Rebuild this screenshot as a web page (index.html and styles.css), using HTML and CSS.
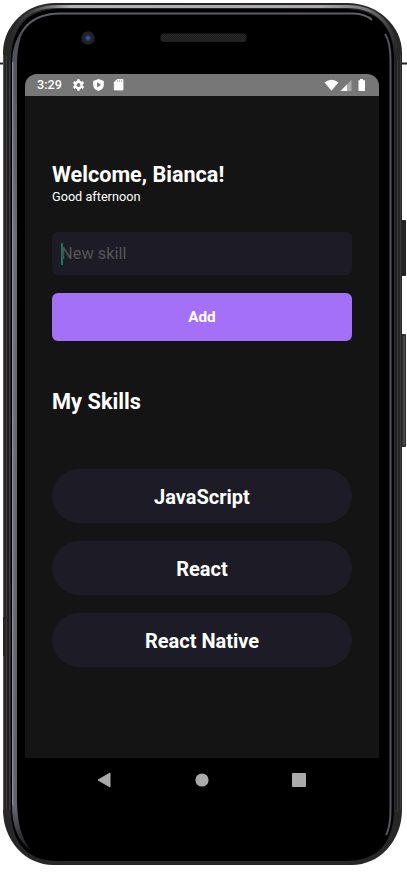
FILE: index.html
```html
<!DOCTYPE html>
<html lang="en">
<head>
<meta charset="utf-8">
<title>My Skills</title>
<link rel="stylesheet" href="styles.css">
</head>
<body>
<div class="stage">
<svg class="device" width="407" height="872" viewBox="0 0 407 872" aria-hidden="true">
  <defs>
    <linearGradient id="rim" x1="0" x2="1" y1="0" y2="0">
      <stop offset="0" stop-color="#272727"/><stop offset=".06" stop-color="#444"/><stop offset=".16" stop-color="#b5b2b6"/><stop offset=".8" stop-color="#aaa7ab"/><stop offset=".92" stop-color="#777"/><stop offset="1" stop-color="#252525"/>
    </linearGradient>
    <linearGradient id="glow" x1="0" x2="0" y1="0" y2="1">
      <stop offset="0" stop-color="#4b4e55"/><stop offset=".25" stop-color="#6a6e76"/><stop offset=".95" stop-color="#60646c"/><stop offset="1" stop-color="#161719"/>
    </linearGradient>
    <radialGradient id="lens"><stop offset="0" stop-color="#4f69ae"/><stop offset=".35" stop-color="#25345f"/><stop offset=".65" stop-color="#151a2a"/><stop offset=".7" stop-color="#272727"/><stop offset="1" stop-color="#1c1c1e"/></radialGradient>
    <pattern id="mesh" width="2" height="2" patternUnits="userSpaceOnUse"><rect width="2" height="2" fill="#1b1b1b"/><path d="M0 0h1v1H0zM1 1h1v1H1z" fill="#282828"/></pattern>
  </defs>
  <path d="M0 63.500h4M402 63.500h5" stroke="#20222e" stroke-width="2"/>
  <rect x="401" y="220" width="5" height="56" rx="1" fill="#262524"/>
  <rect x="401" y="334" width="5" height="113" rx="1" fill="#302f2e"/>
  <path d="M404 336v109" stroke="#65625f"/>
  <path d="M55 3H347A55 50 0 0 1 402 53V810A50 55 0 0 1 352 865H53A50 55 0 0 1 3 810V53A52 50 0 0 1 55 3Z" fill="#272727"/>
  <path d="M3.500 55V617M3.500 656V810" stroke="#555"/>
  <path d="M6.500 56V809M9.500 58V809M397.500 52V812M400.500 54V810" stroke="#3b3b3b"/>
  <path d="M8 56V809M396 55V809" stroke="#191919"/>
  <path d="M9 60Q9 6.500 58 6.500H347Q393 6.500 398 60" fill="none" stroke="url(#rim)" stroke-width="3"/>
  <path d="M58 9H345Q394 10 394 60V808Q394 861 345 861H58Q11 861 11 808V60Q12 10 58 9Z" fill="#000"/>
  <path d="M14.500 64Q15 13.500 61 13.500H353Q366 14 372 20" fill="none" stroke="#5c5f67" stroke-width="2"/>
  <path d="M12 64Q12 42 24 28Q17 45 17 64V800Q17 834 31 850Q12 838 12 805Z" fill="url(#glow)"/>
  <path d="M12.800 62V805" stroke="#9a9ca2"/>
  <path d="M385 34Q390.500 42 390.500 60V810Q390.500 827 386 835" fill="none" stroke="#56555f" stroke-width="2"/>
  <circle cx="88" cy="38" r="6.800" fill="url(#lens)"/>
  <rect x="160.500" y="33.500" width="86" height="8.500" rx="3.500" fill="url(#mesh)"/>
</svg>
<main class="screen">
  <header class="status">
    <span class="clock">3:29</span>
    <svg class="left-icons" width="52" height="14" viewBox="0 0 52 14">
      <circle cx="6.500" cy="7" r="3.200" fill="none" stroke="#fff" stroke-width="2.400"/>
      <path d="M6.500 1.200v2M6.500 10.800v2M1.500 4.100l1.700 1M9.800 8.900l1.700 1M1.500 9.900l1.700-1M9.800 5.100l1.700-1" stroke="#fff" stroke-width="2.400"/>
      <path d="M26.500 1l5.300 2v4c0 3-2 5-5.300 6-3.300-1-5.300-3-5.300-6V3z" fill="#fff"/>
      <path d="M25 4.200l4.200 2.600L25 9.400z" fill="#777"/>
      <path d="M45 1.500h6v10.500h-8.700V4.300z" fill="#fff" stroke="#fff" stroke-width=".8" stroke-linejoin="round"/>
      <path d="M45.500 2.200v2M47.500 2.200v2M49.500 2.200v2" stroke="#999" stroke-width=".7"/>
    </svg>
    <svg class="right-icons" width="42" height="14" viewBox="0 0 42 14">
      <path d="M.5 4.500Q7.500-1 14.500 4.500L7.500 12.700z" fill="#fff"/>
      <path d="M27.500 2v11H16.500z" fill="#aaa"/><path d="M23 6.500V13h-6.500z" fill="#fff"/>
      <path d="M36 1h3v1.200h2V13h-6.500V2.200H36z" fill="#fff"/>
    </svg>
  </header>
  <section class="content">
    <h1>Welcome, Bianca!</h1>
    <p class="greeting">Good afternoon</p>
    <div class="field"><span class="caret"></span><span class="hint">New skill</span></div>
    <button class="add">Add</button>
    <h2>My Skills</h2>
    <ul class="skills"><li>JavaScript</li><li>React</li><li>React Native</li></ul>
  </section>
</main>
<nav class="system-nav">
  <svg width="14" height="16" viewBox="0 0 14 16"><path d="M1 8L13 1v14z" fill="#aaa" stroke="#aaa" stroke-linejoin="round"/></svg>
  <svg width="14" height="14" viewBox="0 0 14 14"><circle cx="7" cy="7" r="6.600" fill="#aaa"/></svg>
  <svg width="14" height="14" viewBox="0 0 14 14"><rect width="14" height="14" rx="1" fill="#aaa"/></svg>
</nav>
</div>
</body>
</html>
```

FILE: styles.css
```css
* { box-sizing: border-box; }
body { margin: 0; background: #fff; font-family: Roboto, sans-serif; color: #fff; overflow: hidden; }
.stage { position: relative; width: 407px; height: 872px; padding: 74px 28px 0 25px; }
.device { position: absolute; left: 0; top: 0; }
.screen { position: relative; height: 684px; background: #141414; border-radius: 12px 12px 0 0; overflow: hidden; }
.status { height: 22px; background: #777; display: flex; align-items: center; padding: 0 13px 0 12px; }
.clock { font-size: 12.6px; font-weight: 500; line-height: 22px; width: 35px; }
.right-icons { margin-left: auto; }
.content { padding: 66px 27px 0; }
h1, h2 { margin: 0; font-size: 21.6px; line-height: 26px; font-weight: 700; white-space: nowrap; }
.greeting { margin: 1px 0 0; font-size: 12.7px; line-height: 16px; }
.field { margin-top: 27px; height: 43px; border-radius: 6px; background: #1d1c26; display: flex; align-items: center; padding-left: 9px; }
.caret { width: 2px; height: 22px; background: #087b6d; margin-right: -2px; }
.hint { font-size: 16.4px; color: #555; }
.add { display: block; width: 100%; height: 48px; margin-top: 18px; border: 0; border-radius: 6px; background: #a370f7; color: #fff; font: 700 15.3px Roboto, sans-serif; }
h2 { margin-top: 48px; font-size: 21.8px; }
.skills { list-style: none; margin: 54px 0 0; padding: 0; display: grid; gap: 18px; }
.skills li { height: 54px; border-radius: 27px; background: #1d1c26; text-align: center; font-size: 20px; line-height: 56px; font-weight: 700; }
.system-nav { position: relative; height: 44px; display: flex; justify-content: space-between; align-items: center; padding: 0 73px 0 72px; }
```
